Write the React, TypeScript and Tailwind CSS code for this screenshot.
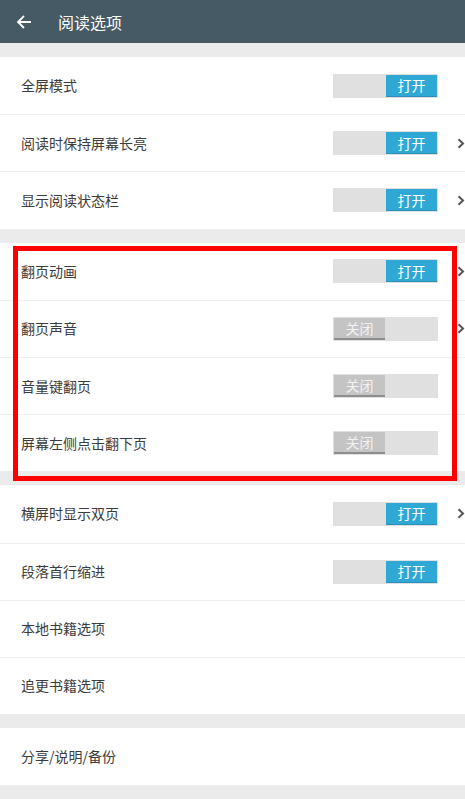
import React from "react";

type Row = { label: string; toggle?: "on" | "off"; chevron?: boolean };

const sections: Row[][] = [
  [
    { label: "全屏模式", toggle: "on" },
    { label: "阅读时保持屏幕长亮", toggle: "on", chevron: true },
    { label: "显示阅读状态栏", toggle: "on", chevron: true },
  ],
  [
    { label: "翻页动画", toggle: "on", chevron: true },
    { label: "翻页声音", toggle: "off", chevron: true },
    { label: "音量键翻页", toggle: "off" },
    { label: "屏幕左侧点击翻下页", toggle: "off" },
  ],
  [
    { label: "横屏时显示双页", toggle: "on", chevron: true },
    { label: "段落首行缩进", toggle: "on" },
    { label: "本地书籍选项" },
    { label: "追更书籍选项" },
  ],
  [{ label: "分享/说明/备份" }],
];

function Toggle({ on }: { on: boolean }) {
  return (
    <div className="flex h-[24px] w-[105px] items-center bg-[#e0e0e0] p-[1px]">
      {on ? (
        <div className="ml-auto flex h-full w-[51px] items-center justify-center border-b border-[#2a90b8] bg-[#2fa8d5] text-[14px] leading-none text-white">
          打开
        </div>
      ) : (
        <div className="flex h-full w-[51px] items-center justify-center border-b-2 border-[#8e8e8e] bg-[#c4c4c4] text-[14px] leading-none text-[#f2f2f2]">
          关闭
        </div>
      )}
    </div>
  );
}

function Chevron() {
  return (
    <svg width="8" height="11" viewBox="0 0 8 11" className="absolute left-[457px]">
      <path d="M1.5 1.2 L6 5.5 L1.5 9.8" fill="none" stroke="#555" strokeWidth="2" />
    </svg>
  );
}

export default function App() {
  return (
    <div
      className="relative h-[799px] w-[465px] overflow-hidden bg-[#ebebeb]"
      style={{ fontFamily: '"Noto Sans CJK SC", "Noto Sans", sans-serif' }}
    >
      <div className="flex h-[43px] items-center bg-[#455a64] text-white">
        <svg width="16" height="16" viewBox="0 0 16 16" className="ml-[16px]">
          <path d="M15 8 H2 M8 2 L2 8 L8 14" fill="none" stroke="white" strokeWidth="1.8" />
        </svg>
        <span className="ml-[26px] text-[16px]">阅读选项</span>
      </div>
      <div className="flex flex-col gap-[14px] pt-[14px]">
        {sections.map((sec, i) => (
          <div key={i} className="bg-white">
            {sec.map((r, j) => (
              <div
                key={j}
                className={`relative flex h-[57.2px] items-center ${j > 0 ? "border-t border-[#efefef]" : ""}`}
              >
                <span className="ml-[21px] text-[14px] text-[#3c3c3c]">{r.label}</span>
                {r.toggle && (
                  <div className="absolute left-[333px]">
                    <Toggle on={r.toggle === "on"} />
                  </div>
                )}
                {r.chevron && <Chevron />}
              </div>
            ))}
          </div>
        ))}
      </div>
      <div className="pointer-events-none absolute left-[13px] top-[246px] h-[235px] w-[444px] border-[5px] border-[#ff0000]" />
    </div>
  );
}
